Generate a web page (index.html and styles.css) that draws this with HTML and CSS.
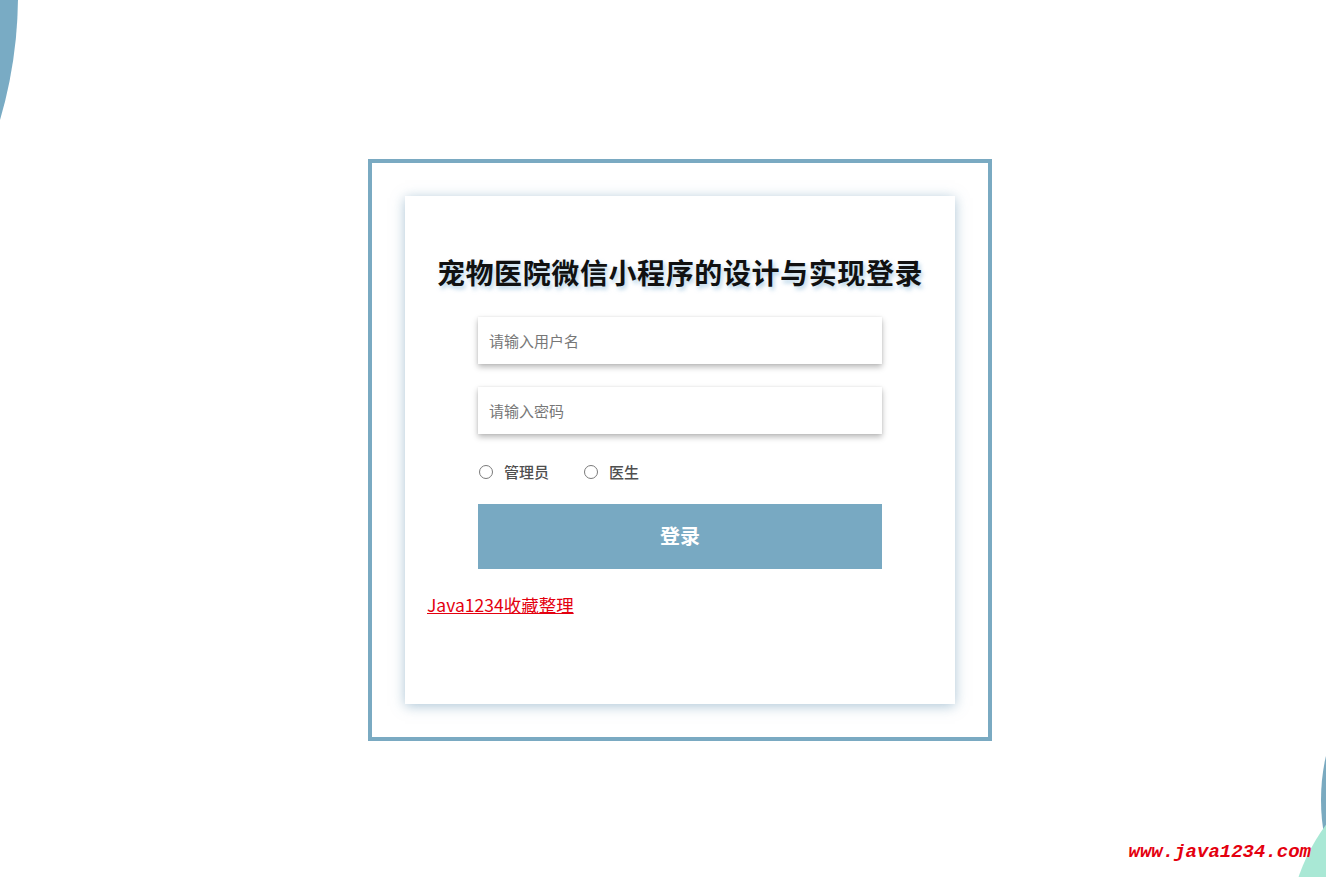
FILE: index.html
```html
<!DOCTYPE html>
<html lang="zh-CN">
<head>
<meta charset="utf-8">
<title>宠物医院微信小程序的设计与实现登录</title>
<link rel="stylesheet" href="styles.css">
</head>
<body>
<div class="deco deco-tl"></div>
<div class="deco deco-br-blue"></div>
<div class="deco deco-br-mint"></div>
<main class="page">
  <div class="frame">
    <div class="card">
      <h1 class="title">宠物医院微信小程序的设计与实现登录</h1>
      <form class="form">
        <input class="field" type="text" placeholder="请输入用户名">
        <input class="field" type="password" placeholder="请输入密码">
        <div class="roles">
          <label class="role"><span class="radio"></span><span class="role-text">管理员</span></label>
          <label class="role"><span class="radio"></span><span class="role-text">医生</span></label>
        </div>
        <button class="submit" type="button">登录</button>
      </form>
      <a class="credit" href="#">Java1234收藏整理</a>
    </div>
  </div>
</main>
<div class="watermark">www.java1234.com</div>
</body>
</html>
```
FILE: styles.css
```css
html, body {
  margin: 0;
  padding: 0;
  height: 100%;
  background: #ffffff;
  overflow: hidden;
  font-family: "Noto Sans CJK SC", "Noto Sans", sans-serif;
}

.deco {
  position: absolute;
  border-radius: 50%;
}
.deco-tl {
  left: -868px;
  top: -448px;
  width: 886px;
  height: 886px;
  background: #79abc4;
}
.deco-br-blue {
  left: 1321px;
  top: 600px;
  width: 400px;
  height: 400px;
  background: #7aaac0;
}
.deco-br-mint {
  left: 1288px;
  top: 746px;
  width: 388px;
  height: 388px;
  background: #a9e8d5;
}

.page {
  position: relative;
  display: flex;
  justify-content: center;
  padding-top: 159px;
  padding-left: 34px;
}

.frame {
  border: 4px solid #7aaac2;
  padding: 33px;
  background: #ffffff;
}

.card {
  width: 550px;
  height: 508px;
  box-sizing: border-box;
  padding: 53px 22px 0 22px;
  background: #ffffff;
  box-shadow: 0 2px 12px rgba(104, 150, 180, 0.55);
  display: flex;
  flex-direction: column;
}

.title {
  margin: 0;
  text-align: center;
  white-space: nowrap;
  font-size: 28px;
  letter-spacing: 0.6px;
  line-height: 46px;
  font-weight: 700;
  color: #111111;
  text-shadow: 2px 3px 4px rgba(130, 180, 215, 0.6);
}

.form {
  width: 404px;
  margin: 22px auto 0;
  display: flex;
  flex-direction: column;
}

.field {
  height: 47px;
  box-sizing: border-box;
  border: none;
  outline: none;
  padding: 0 11px;
  font-family: inherit;
  font-size: 15px;
  color: #333;
  background: #fff;
  box-shadow: 0 3px 6px rgba(0, 0, 0, 0.28), 0 0 2px rgba(0, 0, 0, 0.08);
  margin-bottom: 23px;
}
.field::placeholder {
  color: #777777;
}

.roles {
  display: flex;
  align-items: center;
  gap: 34px;
  height: 24px;
  margin-top: 2px;
}
.role {
  display: flex;
  align-items: center;
  gap: 11px;
}
.radio {
  width: 14px;
  height: 14px;
  border: 1px solid #7a7a7a;
  border-radius: 50%;
  box-sizing: border-box;
  margin-left: 1px;
  margin-top: 2px;
}
.role-text {
  font-size: 15px;
  font-weight: 500;
  color: #4f4f4f;
}

.submit {
  margin-top: 21px;
  height: 65px;
  border: none;
  background: #78a9c2;
  color: #ffffff;
  font-family: inherit;
  font-size: 20px;
  font-weight: 700;
  padding-bottom: 3px;
}

.credit {
  align-self: flex-start;
  margin-top: 23px;
  font-size: 17.5px;
  line-height: 26px;
  color: #e4000f;
  text-decoration: underline;
}

.watermark {
  position: absolute;
  right: 15px;
  bottom: 14px;
  font-family: "Liberation Mono", "Courier New", monospace;
  font-weight: 700;
  font-style: italic;
  font-size: 19px;
  color: #e4000f;
}
```
